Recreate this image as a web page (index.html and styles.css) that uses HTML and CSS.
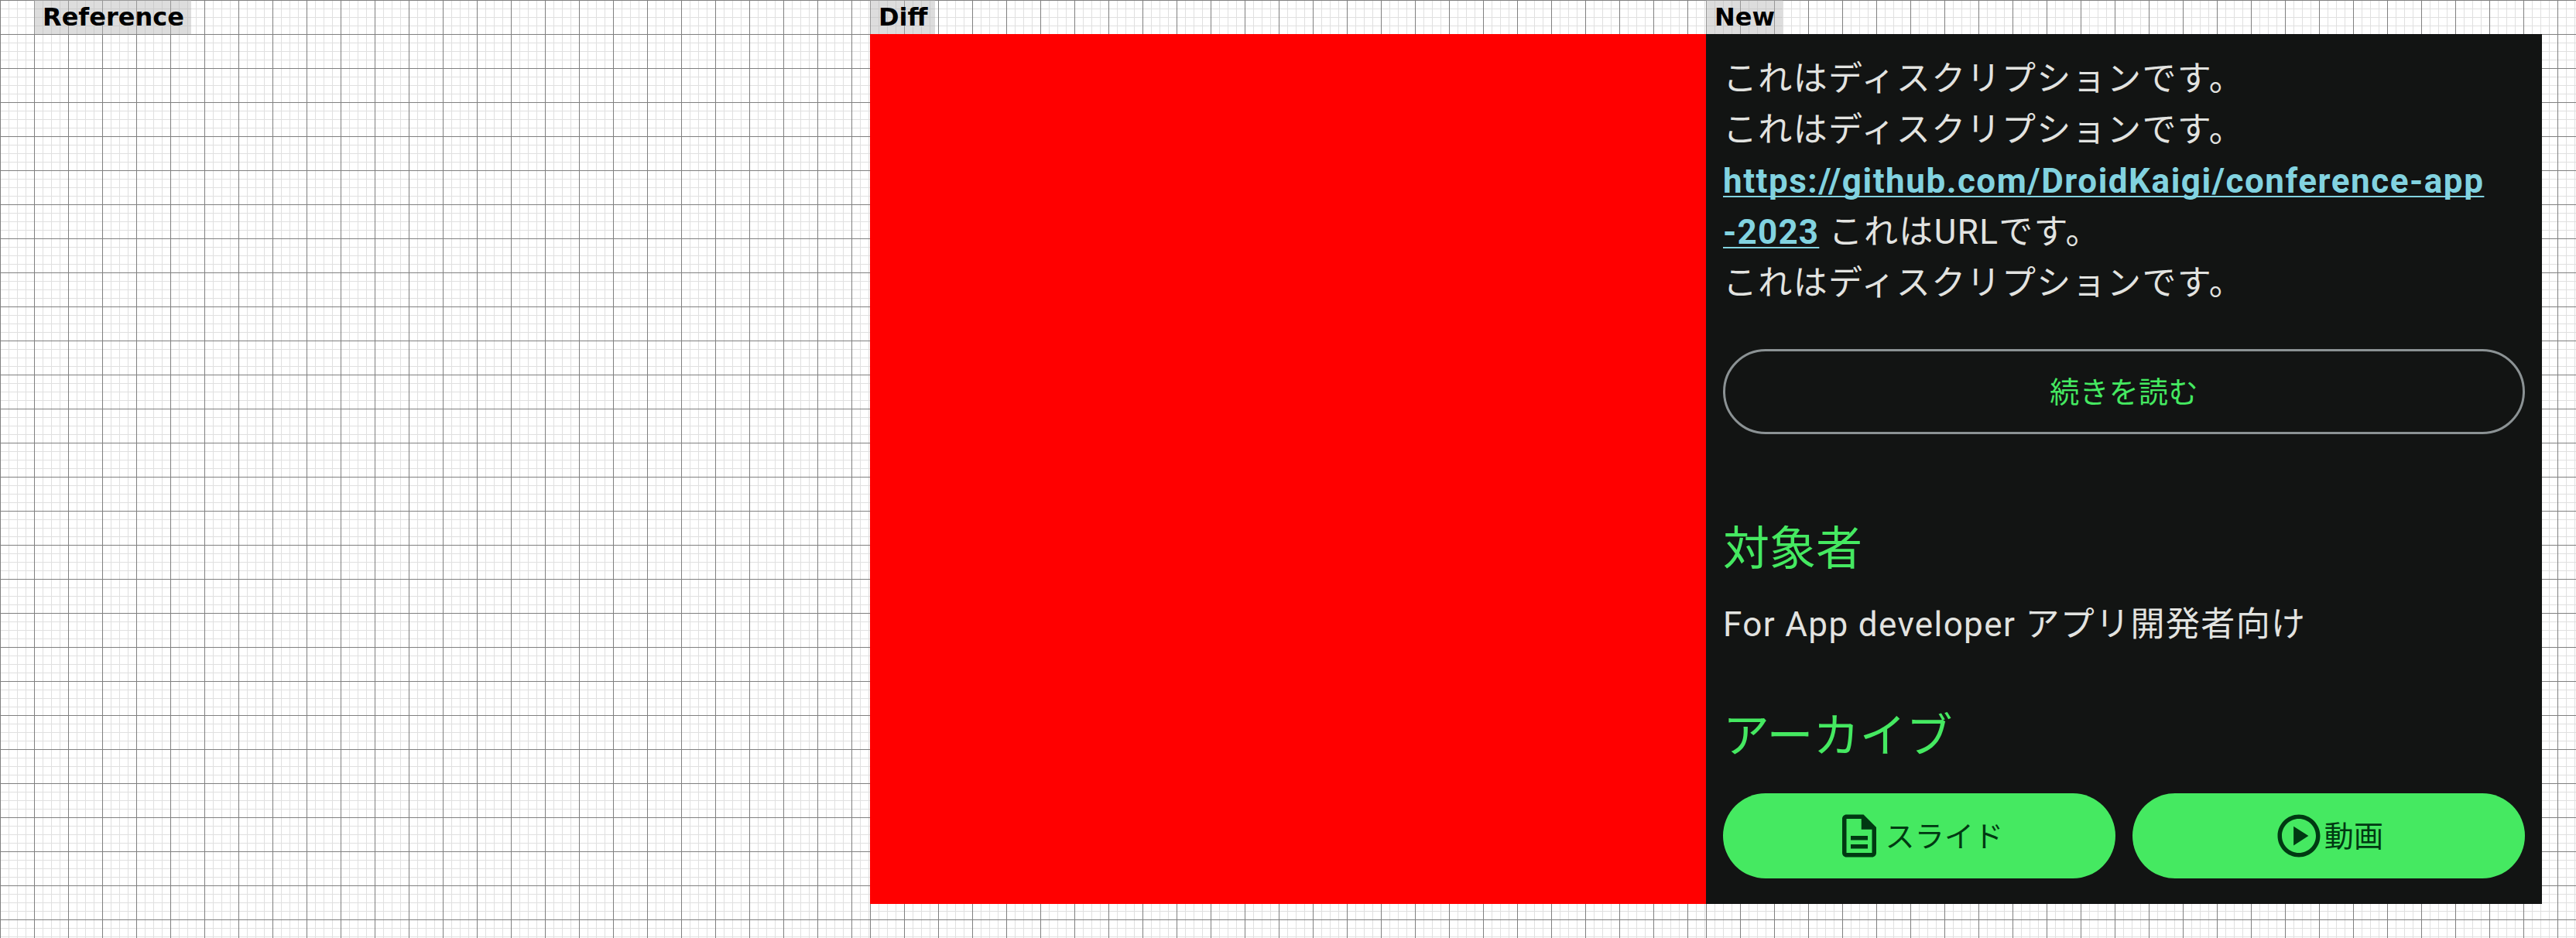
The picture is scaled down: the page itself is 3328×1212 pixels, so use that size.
FILE: index.html
```html
<!DOCTYPE html>
<html lang="ja">
<head>
<meta charset="utf-8">
<title>Screenshot comparison</title>
<link rel="stylesheet" href="styles.css">
</head>
<body>
<main class="board">
  <section class="column column-reference">
    <h2 class="label">Reference</h2>
  </section>
  <section class="column">
    <h2 class="label">Diff</h2>
    <div class="shot shot-diff"></div>
  </section>
  <section class="column column-new">
    <h2 class="label">New</h2>
    <div class="shot screen">
      <p class="body-text description">これはディスクリプションです。<br>これはディスクリプションです。<br><a class="link"><span class="link-wide">https://github.com/DroidKaigi/conference-app</span><br>-2023</a> これはURLです。<br>これはディスクリプションです。</p>
      <div class="button button-outlined">続きを読む</div>
      <h3 class="heading">対象者</h3>
      <p class="body-text audience">For App developer アプリ開発者向け</p>
      <h3 class="heading heading-archive">アーカイブ</h3>
      <div class="actions">
        <div class="button button-filled">
          <svg class="icon" viewBox="0 0 24 24"><path d="M8 16h8v2H8zm0-4h8v2H8zm6-10H6c-1.100 0-2 .9-2 2v16c0 1.100.89 2 1.990 2H18c1.100 0 2-.9 2-2V8l-6-6zm4 18H6V4h7v5h5v11z"/></svg>
          <span>スライド</span>
        </div>
        <div class="button button-filled">
          <svg class="icon" viewBox="0 0 24 24"><path d="M12 2C6.480 2 2 6.480 2 12s4.480 10 10 10 10-4.480 10-10S17.520 2 12 2zm0 18c-4.410 0-8-3.590-8-8s3.590-8 8-8 8 3.590 8 8-3.590 8-8 8zM9.500 16.500l7-4.500-7-4.500z"/></svg>
          <span>動画</span>
        </div>
      </div>
    </div>
  </section>
</main>
</body>
</html>
```
FILE: styles.css
```css
* {
  box-sizing: border-box;
}

body {
  margin: 0;
  background: #fff;
}

h2, h3, p {
  margin: 0;
}

.board {
  display: grid;
  grid-template-columns: 1124px 1080px 1124px;
  width: 3328px;
  height: 1212px;
  overflow: hidden;
}

/* 11px minor grid with a heavier line every 44px */
.column {
  background-image:
    linear-gradient(to right, #808080 1px, transparent 1px),
    linear-gradient(to bottom, #808080 1px, transparent 1px),
    linear-gradient(to right, #e0e0e0 1px, transparent 1px),
    linear-gradient(to bottom, #e0e0e0 1px, transparent 1px);
  background-size: 44px 44px, 44px 44px, 11px 11px, 11px 11px;
}

.column-reference {
  padding-left: 44px;
}

.label {
  width: fit-content;
  height: 44px;
  padding: 0 9.500px 0 11px;
  background: rgba(180, 180, 180, 0.46);
  color: #000;
  font: bold 32px/44px "DejaVu Sans", sans-serif;
}

.shot {
  width: 1080px;
  height: 1124px;
}

.shot-diff {
  background: #f00;
}

.screen {
  padding: 25px 22px 0;
  background: #121413;
  color: #e2e3e0;
  font-family: Roboto, "Noto Sans CJK JP", sans-serif;
}

.body-text {
  font-size: 44px;
  line-height: 66px;
  letter-spacing: 1.375px;
  white-space: nowrap;
}

.link {
  color: #82d3e0;
  font-weight: 700;
  letter-spacing: 1.200px;
  text-decoration: underline;
  text-decoration-thickness: 2px;
  text-decoration-skip-ink: none;
  text-underline-offset: 4px;
}

.link-wide {
  letter-spacing: 1.520px;
}

.button {
  display: flex;
  align-items: center;
  justify-content: center;
  height: 110px;
  border-radius: 55px;
  padding-top: 3px;
  font-size: 38px;
  line-height: 55px;
  letter-spacing: 0.275px;
}

.button-outlined {
  margin-top: 52px;
  border: 3px solid #8b9294;
  color: #45e961;
}

.heading {
  margin-top: 105px;
  color: #45e961;
  font-size: 60px;
  font-weight: 400;
  line-height: 88px;
}

.audience {
  margin-top: 20px;
}

.heading-archive {
  margin-top: 68px;
}

.actions {
  display: grid;
  grid-template-columns: 1fr 1fr;
  gap: 22px;
  margin-top: 29px;
}

.button-filled {
  padding-right: 1px;
  background: #45e961;
  color: #003912;
}

.icon {
  width: 66px;
  height: 66px;
  margin-top: -3px;
  fill: currentColor;
}
```
